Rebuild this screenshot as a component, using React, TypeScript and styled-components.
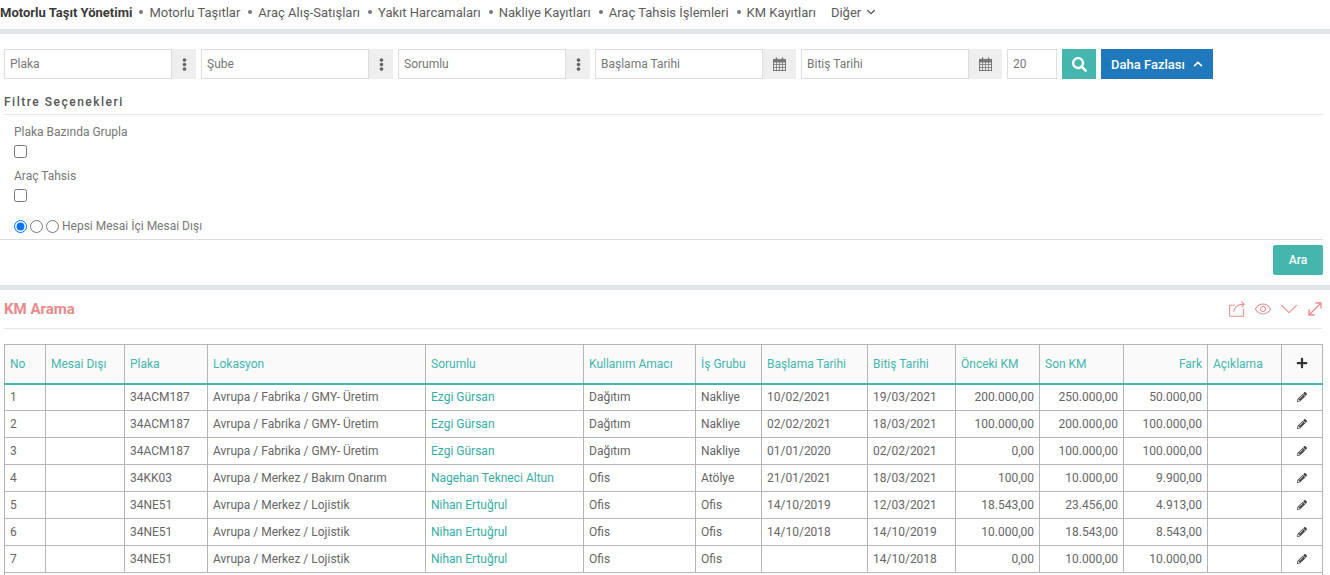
import React from "react";
import styled, { createGlobalStyle } from "styled-components";
import { FaEllipsisV, FaSearch, FaChevronUp, FaPlus, FaPencilAlt } from "react-icons/fa";
import { SlShareAlt, SlEye, SlArrowDown } from "react-icons/sl";
import { ChevronDown } from "lucide-react";

const Global = createGlobalStyle`
  html, body { margin: 0; padding: 0; height: 575px; overflow: hidden; background: #fff; }
  body { font-family: Roboto, "Liberation Sans", sans-serif; font-size: 12px; color: #666; }
  * { box-sizing: border-box; }
`;

const Page = styled.div`
  width: 1330px;
  height: 575px;
  overflow: hidden;
`;

const Nav = styled.nav`
  height: 29px;
  display: flex;
  align-items: center;
  padding-bottom: 5px;
  font-size: 13px;
  color: #5c5c5c;
  white-space: nowrap;
`;

const Brand = styled.span`
  font-weight: 700;
  color: #3a3a3a;
  margin-right: 7px;
`;

const NavLink = styled.span`
  margin-right: 8px;
  &::before {
    content: "";
    display: inline-block;
    width: 4px;
    height: 4px;
    border-radius: 50%;
    background: #777;
    margin-right: 6px;
    vertical-align: 3px;
  }
`;

const NavMore = styled.span`
  display: inline-flex;
  align-items: center;
  gap: 3px;
  margin-left: 7px;
`;

const Band = styled.div`
  height: 5px;
  background: #e1e4e8;
`;

const FilterBar = styled.div`
  display: flex;
  gap: 5px;
  padding: 15px 4px 0;
  height: 45px;
`;

const Group = styled.div<{ $w: number }>`
  display: flex;
  width: ${(p) => p.$w}px;
  height: 30px;
`;

const Field = styled.div`
  flex: 1;
  display: flex;
  align-items: center;
  padding-left: 5px;
  border: 1px solid #ddd;
  color: #777;
`;

const Addon = styled.div<{ $w: number }>`
  width: ${(p) => p.$w}px;
  background: #eee;
  display: flex;
  align-items: center;
  justify-content: center;
  color: #666;
  font-size: 13px;
`;

const CountField = styled(Field)`
  flex: none;
  width: 50px;
`;

const SearchBtn = styled.div`
  width: 34px;
  height: 30px;
  background: #44b6ae;
  color: #fff;
  display: flex;
  align-items: center;
  justify-content: center;
  font-size: 15px;
`;

const MoreBtn = styled.div`
  width: 112px;
  height: 30px;
  background: #2079bd;
  color: #fff;
  display: flex;
  align-items: center;
  gap: 8px;
  padding-left: 10px;
  font-weight: 500;
  font-size: 13px;
`;

const FilterTitle = styled.div`
  margin: 14px 7px 0 4px;
  height: 22px;
  padding-top: 2px;
  font-weight: 500;
  font-size: 12px;
  letter-spacing: 1.5px;
  color: #555;
  border-bottom: 1px solid #e7e7e7;
`;

const Options = styled.div`
  padding: 10px 14px 0;
  height: 125px;
  margin: 0 7px 0 0;
  border-bottom: 1px solid #ddd;
`;

const OptLabel = styled.div`
  height: 15px;
  line-height: 15px;
  color: #777;
`;

const Check = styled.input.attrs({ type: "checkbox" })`
  display: block;
  width: 13px;
  height: 13px;
  margin: 5px 0 11px 0;
`;

const RadioRow = styled.div`
  display: flex;
  align-items: center;
  margin-top: 17px;
  height: 14px;
  color: #777;
`;

const Radio = styled.input.attrs({ type: "radio" })`
  width: 13px;
  height: 13px;
  margin: 0 3px 0 0;
`;

const Actions = styled.div`
  display: flex;
  justify-content: flex-end;
  padding: 5px 7px 0 0;
  height: 45px;
`;

const SubmitBtn = styled.div`
  width: 50px;
  height: 30px;
  background: #44b6ae;
  border-radius: 2px;
  color: #fff;
  font-weight: 500;
  display: flex;
  align-items: center;
  justify-content: center;
`;

const Head = styled.div`
  margin: 0 8px 0 4px;
  height: 39px;
  display: flex;
  align-items: center;
  justify-content: space-between;
  border-bottom: 1px solid #e7e7e7;
`;

const Title = styled.h2`
  margin: 0;
  font-size: 15px;
  font-weight: 700;
  color: #e88a8a;
`;

const Tools = styled.div`
  display: flex;
  align-items: center;
  gap: 10px;
  color: #e88a8a;
  font-size: 16px;
`;

const Table = styled.table`
  margin: 15px 0 0 4px;
  width: 1318px;
  border-collapse: collapse;
  table-layout: fixed;
`;

const Th = styled.th<{ $right?: boolean; $center?: boolean }>`
  height: 39px;
  padding: 0 5px;
  background: #fafafa;
  border: 1px solid #b5b5b5;
  border-bottom: 2px solid #44b6ae;
  color: #44b6ae;
  font-weight: 400;
  font-size: 12px;
  text-align: ${(p) => (p.$center ? "center" : p.$right ? "right" : "left")};
  white-space: nowrap;
  overflow: hidden;
`;

const Td = styled.td<{ $right?: boolean; $center?: boolean; $link?: boolean }>`
  height: 27px;
  padding: 0 5px;
  border: 1px solid #b5b5b5;
  color: ${(p) => (p.$link ? "#35ada3" : "#666")};
  text-align: ${(p) => (p.$center ? "center" : p.$right ? "right" : "left")};
  white-space: nowrap;
  overflow: hidden;
`;

const Col = styled.col<{ $w: number }>`
  width: ${(p) => p.$w}px;
`;

const PlusIcon = styled(FaPlus)`
  color: #333;
  font-size: 12px;
  vertical-align: -1px;
`;

const EditIcon = styled(FaPencilAlt)`
  color: #444;
  font-size: 10px;
  vertical-align: -1px;
`;

const CalendarIcon = () => (
  <svg width="13" height="14" viewBox="0 0 13 14" fill="none" stroke="#777" strokeWidth="1">
    <rect x="0.5" y="2.5" width="12" height="11" />
    <rect x="0.5" y="2.5" width="12" height="2.5" fill="#777" />
    <path d="M0.5 7.5H12.5M0.5 10.5H12.5M3.5 5V13.5M6.5 5V13.5M9.5 5V13.5" strokeWidth="0.8" />
    <path d="M3.5 0.5V3M9.5 0.5V3" strokeWidth="1.6" />
  </svg>
);

const ExpandIcon = () => (
  <svg width="15" height="14" viewBox="-1 0 15 14" fill="none" stroke="#e88a8a" strokeWidth="1.3">
    <path d="M1.5 12.5L12.5 1.5M7.5 1H13V6.5M1 7.5V13H6.5" />
  </svg>
);

const widths = [41, 79, 83, 218, 158, 112, 66, 106, 88, 84, 84, 84, 74, 41];
const headers = ["No", "Mesai Dışı", "Plaka", "Lokasyon", "Sorumlu", "Kullanım Amacı", "İş Grubu", "Başlama Tarihi", "Bitiş Tarihi", "Önceki KM", "Son KM", "Fark", "Açıklama"];
const rows = [
  ["1", "34ACM187", "Avrupa / Fabrika / GMY- Üretim", "Ezgi Gürsan", "Dağıtım", "Nakliye", "10/02/2021", "19/03/2021", "200.000,00", "250.000,00", "50.000,00"],
  ["2", "34ACM187", "Avrupa / Fabrika / GMY- Üretim", "Ezgi Gürsan", "Dağıtım", "Nakliye", "02/02/2021", "18/03/2021", "100.000,00", "200.000,00", "100.000,00"],
  ["3", "34ACM187", "Avrupa / Fabrika / GMY- Üretim", "Ezgi Gürsan", "Dağıtım", "Nakliye", "01/01/2020", "02/02/2021", "0,00", "100.000,00", "100.000,00"],
  ["4", "34KK03", "Avrupa / Merkez / Bakım Onarım", "Nagehan Tekneci Altun", "Ofis", "Atölye", "21/01/2021", "18/03/2021", "100,00", "10.000,00", "9.900,00"],
  ["5", "34NE51", "Avrupa / Merkez / Lojistik", "Nihan Ertuğrul", "Ofis", "Ofis", "14/10/2019", "12/03/2021", "18.543,00", "23.456,00", "4.913,00"],
  ["6", "34NE51", "Avrupa / Merkez / Lojistik", "Nihan Ertuğrul", "Ofis", "Ofis", "14/10/2018", "14/10/2019", "10.000,00", "18.543,00", "8.543,00"],
  ["7", "34NE51", "Avrupa / Merkez / Lojistik", "Nihan Ertuğrul", "Ofis", "Ofis", "", "14/10/2018", "0,00", "10.000,00", "10.000,00"],
];

const navItems = ["Motorlu Taşıtlar", "Araç Alış-Satışları", "Yakıt Harcamaları", "Nakliye Kayıtları", "Araç Tahsis İşlemleri", "KM Kayıtları"];

export default function App() {
  return (
    <Page>
      <Global />
      <Nav>
        <Brand>Motorlu Taşıt Yönetimi</Brand>
        {navItems.map((n) => <NavLink key={n}>{n}</NavLink>)}
        <NavMore>Diğer <ChevronDown size={14} /></NavMore>
      </Nav>
      <Band />
      <FilterBar>
        {["Plaka", "Şube", "Sorumlu"].map((l) => (
          <Group $w={192} key={l}>
            <Field>{l}</Field>
            <Addon $w={24}><FaEllipsisV /></Addon>
          </Group>
        ))}
        {["Başlama Tarihi", "Bitiş Tarihi"].map((l) => (
          <Group $w={201} key={l}>
            <Field>{l}</Field>
            <Addon $w={33}><CalendarIcon /></Addon>
          </Group>
        ))}
        <CountField>20</CountField>
        <SearchBtn><FaSearch /></SearchBtn>
        <MoreBtn>Daha Fazlası <FaChevronUp size={10} /></MoreBtn>
      </FilterBar>
      <FilterTitle>Filtre Seçenekleri</FilterTitle>
      <Options>
        <OptLabel>Plaka Bazında Grupla</OptLabel>
        <Check readOnly />
        <OptLabel>Araç Tahsis</OptLabel>
        <Check readOnly />
        <RadioRow>
          <Radio name="m" defaultChecked />
          <Radio name="m" />
          <Radio name="m" />
          Hepsi Mesai İçi Mesai Dışı
        </RadioRow>
      </Options>
      <Actions><SubmitBtn>Ara</SubmitBtn></Actions>
      <Band />
      <Head>
        <Title>KM Arama</Title>
        <Tools><SlShareAlt /><SlEye /><SlArrowDown /><ExpandIcon /></Tools>
      </Head>
      <Table>
        <colgroup>{widths.map((w, i) => <Col $w={w} key={i} />)}</colgroup>
        <thead>
          <tr>
            {headers.map((h) => <Th key={h} $right={h === "Fark"}>{h}</Th>)}
            <Th $center><PlusIcon /></Th>
          </tr>
        </thead>
        <tbody>
          {rows.map((r) => (
            <tr key={r[0]}>
              <Td>{r[0]}</Td>
              <Td />
              <Td>{r[1]}</Td>
              <Td>{r[2]}</Td>
              <Td $link>{r[3]}</Td>
              <Td>{r[4]}</Td>
              <Td>{r[5]}</Td>
              <Td>{r[6]}</Td>
              <Td>{r[7]}</Td>
              <Td $right>{r[8]}</Td>
              <Td $right>{r[9]}</Td>
              <Td $right>{r[10]}</Td>
              <Td />
              <Td $center><EditIcon /></Td>
            </tr>
          ))}
          <tr><Td colSpan={14} /></tr>
        </tbody>
      </Table>
    </Page>
  );
}
